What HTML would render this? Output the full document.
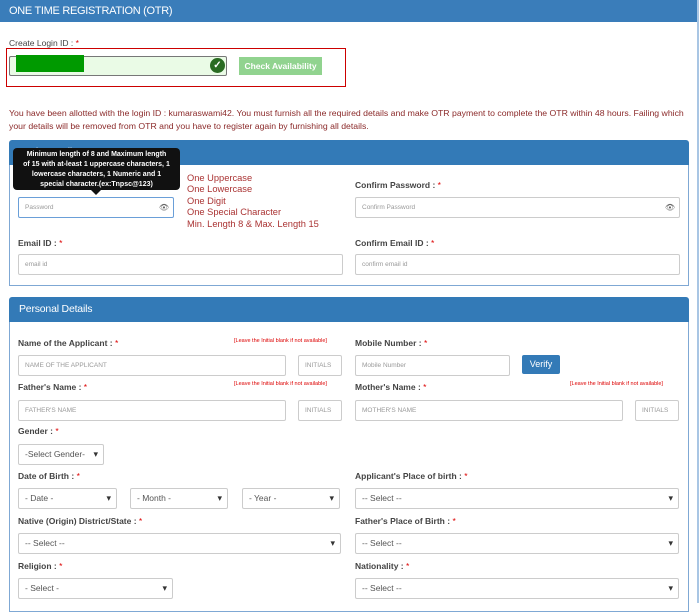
<!DOCTYPE html>
<html><head><meta charset="utf-8"><style>
*{box-sizing:border-box;margin:0;padding:0}
body{width:700px;height:603px;overflow:hidden;background:#fff;font-family:"Liberation Sans",sans-serif;position:relative}
.a{position:absolute}
.lbl{position:absolute;font-size:8.5px;color:#444;font-weight:bold}
.lbl b{color:#d00;font-weight:normal}
.in{position:absolute;border:1px solid #ccc;border-radius:2px;height:21px;font-size:6.5px;color:#999;padding-left:6px;line-height:19px;background:#fff}
.sel{position:absolute;border:1px solid #ccc;border-radius:2px;height:21px;font-size:8.5px;color:#555;padding-left:6px;line-height:19px;background:#fff}
.sel:after{content:"\25BE";position:absolute;right:5px;top:0;font-size:9px;color:#333}
.note{position:absolute;font-size:5.5px;color:#d00}
.ph{position:absolute;left:9px;width:680px;height:25px;background:#337ab7;border-radius:3px 3px 0 0;color:#fff;font-size:10.5px;padding-left:10px;line-height:25px;letter-spacing:-0.2px}
.pb{position:absolute;left:9px;width:680px;border:1px solid #7fa8d4;border-top:none}
.rule{position:absolute;left:187px;font-size:9.3px;color:#a33}
</style></head><body>
<div class="a" style="left:0;top:0;width:697px;height:22px;background:#3a7dba;color:#fff;font-size:11px;padding-left:9px;line-height:22px;letter-spacing:-0.3px">ONE TIME REGISTRATION (OTR)</div>
<div class="a" style="left:697px;top:0;width:2px;height:603px;background:#a9c6e4"></div>
<div class="lbl" style="left:9px;top:38px;font-weight:normal">Create Login ID : <b>*</b></div>
<div class="a" style="left:6px;top:48px;width:340px;height:39px;border:1px solid #c00"></div>
<div class="a" style="left:9px;top:56px;width:218px;height:20px;background:#eafbe6;border:1px solid #777;border-radius:2px"></div>
<div class="a" style="left:16px;top:55px;width:68px;height:17px;background:#009a00"></div>
<div class="a" style="left:210px;top:58px;width:15px;height:15px;border-radius:50%;background:#2a6b22;color:#fff;font-size:10px;line-height:15px;text-align:center;font-weight:bold">✓</div>
<div class="a" style="left:239px;top:57px;width:83px;height:18px;background:#91d38f;color:#fff;font-size:8.5px;font-weight:bold;text-align:center;line-height:18px">Check Availability</div>
<div class="a" style="left:9px;top:107px;font-size:8.7px;color:#8b2a2a;line-height:13px;width:690px">You have been allotted with the login ID : kumaraswami42. You must furnish all the required details and make OTR payment to complete the OTR within 48 hours. Failing which your details will be removed from OTR and you have to register again by furnishing all details.</div>

<div class="ph" style="top:140px">Login Details</div>
<div class="pb" style="top:165px;height:121px"></div>
<div class="a" style="left:13px;top:148px;width:167px;height:42px;background:#111;border-radius:4px;color:#fff;font-size:7px;font-weight:bold;text-align:center;line-height:10px;padding:2px 10px 0">Minimum length of 8 and Maximum length of 15 with at-least 1 uppercase characters, 1 lowercase characters, 1 Numeric and 1 special character.(ex:Tnpsc@123)</div>
<div class="a" style="left:91px;top:190px;width:0;height:0;border-left:5px solid transparent;border-right:5px solid transparent;border-top:5px solid #111"></div>
<div class="rule" style="top:173px">One Uppercase</div>
<div class="rule" style="top:184px">One Lowercase</div>
<div class="rule" style="top:196px">One Digit</div>
<div class="rule" style="top:207px">One Special Character</div>
<div class="rule" style="top:219px">Min. Length 8 &amp; Max. Length 15</div>
<div class="in" style="left:18px;top:197px;width:156px;border-color:#6a9fd8">Password<span style="position:absolute;right:4px;color:#666;font-size:8px">👁</span></div>
<div class="lbl" style="left:355px;top:180px">Confirm Password : <b>*</b></div>
<div class="in" style="left:355px;top:197px;width:325px">Confirm Password<span style="position:absolute;right:4px;color:#666;font-size:8px">👁</span></div>
<div class="lbl" style="left:18px;top:238px">Email ID : <b>*</b></div>
<div class="in" style="left:18px;top:254px;width:325px">email id</div>
<div class="lbl" style="left:355px;top:238px">Confirm Email ID : <b>*</b></div>
<div class="in" style="left:355px;top:254px;width:325px">confirm email id</div>

<div class="ph" style="top:297px">Personal Details</div>
<div class="pb" style="top:322px;height:290px"></div>
<div class="lbl" style="left:18px;top:338px">Name of the Applicant : <b>*</b></div>
<div class="note" style="left:234px;top:338px">[Leave the Initial blank if not available]</div>
<div class="in" style="left:18px;top:355px;width:268px">NAME OF THE APPLICANT</div>
<div class="in" style="left:298px;top:355px;width:44px">INITIALS</div>
<div class="lbl" style="left:355px;top:338px">Mobile Number : <b>*</b></div>
<div class="in" style="left:355px;top:355px;width:155px">Mobile Number</div>
<div class="a" style="left:522px;top:355px;width:38px;height:19px;background:#337ab7;color:#fff;font-size:9px;text-align:center;line-height:19px;border-radius:2px">Verify</div>
<div class="lbl" style="left:18px;top:382px">Father's Name : <b>*</b></div>
<div class="note" style="left:234px;top:381px">[Leave the Initial blank if not available]</div>
<div class="in" style="left:18px;top:400px;width:268px">FATHER'S NAME</div>
<div class="in" style="left:298px;top:400px;width:44px">INITIALS</div>
<div class="lbl" style="left:355px;top:382px">Mother's Name : <b>*</b></div>
<div class="note" style="left:570px;top:381px">[Leave the Initial blank if not available]</div>
<div class="in" style="left:355px;top:400px;width:268px">MOTHER'S NAME</div>
<div class="in" style="left:635px;top:400px;width:44px">INITIALS</div>
<div class="lbl" style="left:18px;top:426px">Gender : <b>*</b></div>
<div class="sel" style="left:18px;top:444px;width:86px">-Select Gender-</div>
<div class="lbl" style="left:18px;top:471px">Date of Birth : <b>*</b></div>
<div class="sel" style="left:18px;top:488px;width:99px">- Date -</div>
<div class="sel" style="left:130px;top:488px;width:98px">- Month -</div>
<div class="sel" style="left:242px;top:488px;width:98px">- Year -</div>
<div class="lbl" style="left:355px;top:471px">Applicant's Place of birth : <b>*</b></div>
<div class="sel" style="left:355px;top:488px;width:324px">-- Select --</div>
<div class="lbl" style="left:18px;top:516px">Native (Origin) District/State : <b>*</b></div>
<div class="sel" style="left:18px;top:533px;width:323px">-- Select --</div>
<div class="lbl" style="left:355px;top:516px">Father's Place of Birth : <b>*</b></div>
<div class="sel" style="left:355px;top:533px;width:324px">-- Select --</div>
<div class="lbl" style="left:18px;top:561px">Religion : <b>*</b></div>
<div class="sel" style="left:18px;top:578px;width:155px">- Select -</div>
<div class="lbl" style="left:355px;top:561px">Nationality : <b>*</b></div>
<div class="sel" style="left:355px;top:578px;width:324px">-- Select --</div>
</body></html>
